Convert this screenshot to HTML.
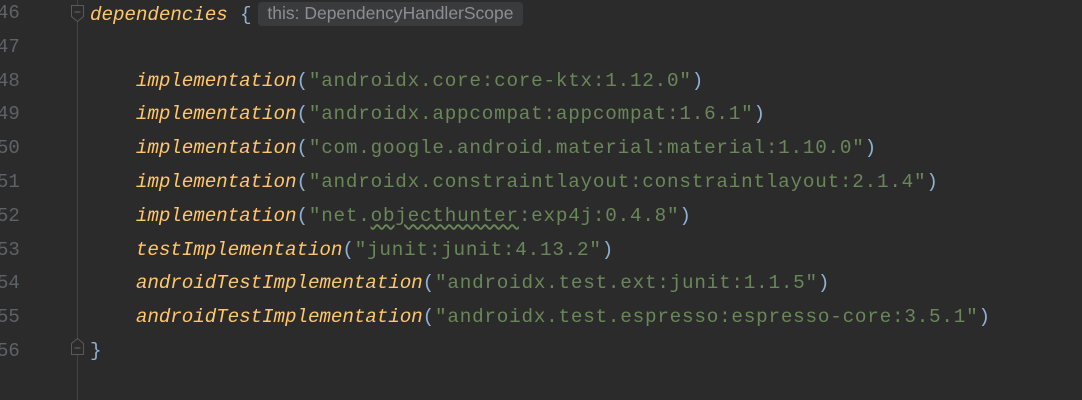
<!DOCTYPE html>
<html><head><style>
html,body{margin:0;padding:0;background:#2b2b2b;width:1082px;height:400px;overflow:hidden}
.ln{position:absolute;left:-3px;width:40px;font:19px "Liberation Mono",monospace;color:#5f6266;}
.code{position:absolute;left:90px;font:19.3px "Liberation Mono",monospace;color:#a9b7c6;white-space:pre;letter-spacing:0.78px}
.f{color:#ffc66d;font-style:italic;letter-spacing:-0.1px}
.s{color:#6a8759}
.p{color:#8fb0d3}
.w{text-decoration:underline wavy #6a8759;text-underline-offset:3px}
.gut{position:absolute;left:77px;top:0;width:1px;height:400px;background:#444}
.hint{display:inline-block;background:#3a3b3c;color:#8b8e92;font:17.5px "Liberation Sans",sans-serif;font-style:normal;padding:1px 9px 2px 9px;border-radius:4px;vertical-align:1px;margin-left:6px;letter-spacing:0}
</style></head><body>
<div class="gut"></div>
<svg style="position:absolute;left:70px;top:4px" width="16" height="20"><path d="M1.5 1.5h12v11l-6 5l-6-5z" fill="#2b2b2b" stroke="#5a5a5a"/><path d="M4.5 8h6" stroke="#6a6a6a"/></svg>
<svg style="position:absolute;left:70px;top:336px" width="16" height="20"><path d="M1.5 18.5h12v-11l-6-5l-6 5z" fill="#2b2b2b" stroke="#5a5a5a"/><path d="M4.5 12h6" stroke="#6a6a6a"/></svg>
<div id="c"></div>
<script>
var lines=[
'<span class="f">dependencies</span> <span class="p">{</span><span class="hint">this: DependencyHandlerScope</span>',
'',
'<span class="f">    implementation</span><span class="p">(</span><span class="s">"androidx.core:core-ktx:1.12.0"</span><span class="p">)</span>',
'<span class="f">    implementation</span><span class="p">(</span><span class="s">"androidx.appcompat:appcompat:1.6.1"</span><span class="p">)</span>',
'<span class="f">    implementation</span><span class="p">(</span><span class="s">"com.google.android.material:material:1.10.0"</span><span class="p">)</span>',
'<span class="f">    implementation</span><span class="p">(</span><span class="s">"androidx.constraintlayout:constraintlayout:2.1.4"</span><span class="p">)</span>',
'<span class="f">    implementation</span><span class="p">(</span><span class="s">"net.<span class="w">objecthunter</span>:exp4j:0.4.8"</span><span class="p">)</span>',
'<span class="f">    testImplementation</span><span class="p">(</span><span class="s">"junit:junit:4.13.2"</span><span class="p">)</span>',
'<span class="f">    androidTestImplementation</span><span class="p">(</span><span class="s">"androidx.test.ext:junit:1.1.5"</span><span class="p">)</span>',
'<span class="f">    androidTestImplementation</span><span class="p">(</span><span class="s">"androidx.test.espresso:espresso-core:3.5.1"</span><span class="p">)</span>',
'<span class="p">}</span>'];
var h='';
for(var i=0;i<lines.length;i++){var y=2+i*33.8;
h+='<div class="ln" style="top:'+y+'px">'+(46+i)+'</div><div class="code" style="top:'+y+'px">'+lines[i]+'</div>';}
document.getElementById('c').innerHTML=h;
</script>
</body></html>
